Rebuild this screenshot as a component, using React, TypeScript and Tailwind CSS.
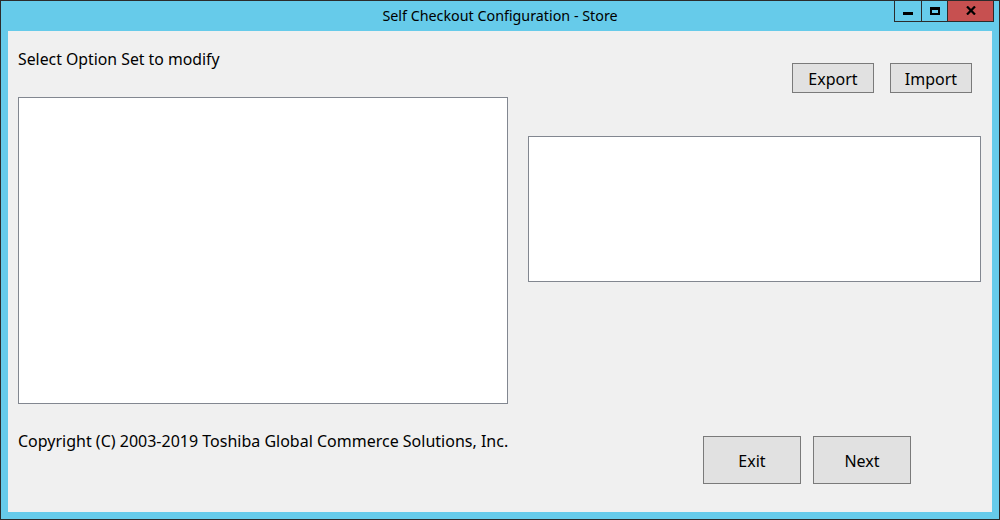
import React from "react";

const font = { fontFamily: '"Noto Sans", "Open Sans", sans-serif' };

function Btn({ label, w, h, size }: { label: string; w: string; h: string; size: string }) {
  return (
    <div className={`${w} ${h} ${size} flex items-center justify-center pt-[2px] bg-[#e1e1e1] border border-[#7a7a7a] text-[#000]`}>
      {label}
    </div>
  );
}

export default function App() {
  return (
    <div style={font} className="w-[1000px] h-[520px] border border-[#2b2b2b] bg-[#66cbea] flex flex-col overflow-hidden">
      {/* title bar */}
      <div className="h-[30px] flex relative">
        <div className="flex-1 flex items-center justify-center text-[14.3px] text-[#000]">
          Self Checkout Configuration - Store
        </div>
        <div className="absolute right-[5px] top-[-1px] flex h-[22px] border border-[#2b2b2b] border-t-0">
          <div className="w-[27px] h-full flex items-center justify-center border-r border-[#2b2b2b]">
            <div className="w-[10px] h-[3px] bg-black mt-[6px]" />
          </div>
          <div className="w-[26px] h-full flex items-center justify-center border-r border-[#2b2b2b]">
            <div className="w-[10px] h-[8px] border-2 border-t-[3px] border-black mt-[1px]" />
          </div>
          <div className="w-[45px] h-full flex items-center justify-center bg-[#c75050]">
            <svg width="10" height="9" viewBox="0 0 10 9">
              <path d="M1 0.5 L9 8.5 M9 0.5 L1 8.5" stroke="#000" strokeWidth="2.2" />
            </svg>
          </div>
        </div>
      </div>
      {/* client */}
      <div className="mx-[7px] h-[481px] bg-[#f0f0f0] flex text-[#000]">
        <div className="ml-[10px] w-[490px] flex flex-col">
          <div className="mt-[18px] h-[20px] leading-[20px] text-[15.8px] whitespace-nowrap">Select Option Set to modify</div>
          <div className="mt-[28px] h-[307px] bg-white border border-[#828790]" />
          <div className="mt-[27px] h-[20px] leading-[20px] text-[16px] whitespace-nowrap">
            Copyright (C) 2003-2019 Toshiba Global Commerce Solutions, Inc.
          </div>
        </div>
        <div className="ml-[20px] w-[453px] flex flex-col">
          <div className="mt-[32px] flex justify-end gap-[16px] pr-[9px]">
            <Btn label="Export" w="w-[82px]" h="h-[30px]" size="text-[16px]" />
            <Btn label="Import" w="w-[82px]" h="h-[30px]" size="text-[16px]" />
          </div>
          <div className="mt-[43px] h-[146px] bg-white border border-[#828790]" />
          <div className="mt-[154px] flex justify-end gap-[12px] pr-[70px]">
            <Btn label="Exit" w="w-[98px]" h="h-[48px]" size="text-[16px]" />
            <Btn label="Next" w="w-[98px]" h="h-[48px]" size="text-[16px]" />
          </div>
        </div>
      </div>
    </div>
  );
}
